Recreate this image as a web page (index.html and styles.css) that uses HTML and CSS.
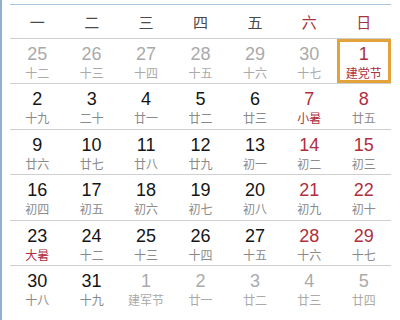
FILE: index.html
```html
<!DOCTYPE html>
<html lang="zh">
<head>
<meta charset="utf-8">
<link rel="stylesheet" href="styles.css">
</head>
<body>
<div class="frame">
  <div class="cal">
    <div class="head">
      <div>一</div><div>二</div><div>三</div><div>四</div><div>五</div><div class="we">六</div><div class="we">日</div>
    </div>
    <div class="row">
      <div class="cell other"><span class="n">25</span><span class="l">十二</span></div>
      <div class="cell other"><span class="n">26</span><span class="l">十三</span></div>
      <div class="cell other"><span class="n">27</span><span class="l">十四</span></div>
      <div class="cell other"><span class="n">28</span><span class="l">十五</span></div>
      <div class="cell other"><span class="n">29</span><span class="l">十六</span></div>
      <div class="cell other"><span class="n">30</span><span class="l">十七</span></div>
      <div class="cell we today"><span class="n">1</span><span class="l fest">建党节</span></div>
    </div>
    <div class="row">
      <div class="cell"><span class="n">2</span><span class="l">十九</span></div>
      <div class="cell"><span class="n">3</span><span class="l">二十</span></div>
      <div class="cell"><span class="n">4</span><span class="l">廿一</span></div>
      <div class="cell"><span class="n">5</span><span class="l">廿二</span></div>
      <div class="cell"><span class="n">6</span><span class="l">廿三</span></div>
      <div class="cell we"><span class="n">7</span><span class="l fest">小暑</span></div>
      <div class="cell we"><span class="n">8</span><span class="l">廿五</span></div>
    </div>
    <div class="row">
      <div class="cell"><span class="n">9</span><span class="l">廿六</span></div>
      <div class="cell"><span class="n">10</span><span class="l">廿七</span></div>
      <div class="cell"><span class="n">11</span><span class="l">廿八</span></div>
      <div class="cell"><span class="n">12</span><span class="l">廿九</span></div>
      <div class="cell"><span class="n">13</span><span class="l">初一</span></div>
      <div class="cell we"><span class="n">14</span><span class="l">初二</span></div>
      <div class="cell we"><span class="n">15</span><span class="l">初三</span></div>
    </div>
    <div class="row">
      <div class="cell"><span class="n">16</span><span class="l">初四</span></div>
      <div class="cell"><span class="n">17</span><span class="l">初五</span></div>
      <div class="cell"><span class="n">18</span><span class="l">初六</span></div>
      <div class="cell"><span class="n">19</span><span class="l">初七</span></div>
      <div class="cell"><span class="n">20</span><span class="l">初八</span></div>
      <div class="cell we"><span class="n">21</span><span class="l">初九</span></div>
      <div class="cell we"><span class="n">22</span><span class="l">初十</span></div>
    </div>
    <div class="row">
      <div class="cell"><span class="n">23</span><span class="l fest">大暑</span></div>
      <div class="cell"><span class="n">24</span><span class="l">十二</span></div>
      <div class="cell"><span class="n">25</span><span class="l">十三</span></div>
      <div class="cell"><span class="n">26</span><span class="l">十四</span></div>
      <div class="cell"><span class="n">27</span><span class="l">十五</span></div>
      <div class="cell we"><span class="n">28</span><span class="l">十六</span></div>
      <div class="cell we"><span class="n">29</span><span class="l">十七</span></div>
    </div>
    <div class="row last">
      <div class="cell"><span class="n">30</span><span class="l">十八</span></div>
      <div class="cell"><span class="n">31</span><span class="l">十九</span></div>
      <div class="cell other"><span class="n">1</span><span class="l">建军节</span></div>
      <div class="cell other"><span class="n">2</span><span class="l">廿一</span></div>
      <div class="cell other"><span class="n">3</span><span class="l">廿二</span></div>
      <div class="cell other"><span class="n">4</span><span class="l">廿三</span></div>
      <div class="cell other"><span class="n">5</span><span class="l">廿四</span></div>
    </div>
  </div>
</div>
</body>
</html>
```
FILE: styles.css
```css
html, body {
  margin: 0;
  padding: 0;
  background: #fff;
}
.frame {
  width: 398px;
  height: 320px;
  border-left: 2px solid #8fb1cf;
  padding-top: 4px;
  padding-left: 8px;
  box-sizing: border-box;
}
.cal {
  width: 381px;
  border-top: 1px solid #a9c4dc;
  font-family: "Liberation Sans", "Noto Sans CJK SC", sans-serif;
}
.head {
  display: grid;
  grid-template-columns: repeat(7, 1fr);
  height: 33px;
  border-bottom: 1px solid #cfcfcf;
  align-items: center;
  font-family: "Noto Sans CJK SC", sans-serif;
  font-size: 15px;
  color: #4a4a4a;
  text-align: center;
}
.head .we {
  color: #a8333f;
}
.row {
  display: grid;
  grid-template-columns: repeat(7, 1fr);
  border-bottom: 1px solid #cfcfcf;
}
.row.last {
  border-bottom: none;
}
.cell {
  height: 44.4px;
  box-sizing: border-box;
  display: flex;
  flex-direction: column;
  align-items: center;
  padding-top: 5px;
}
.n {
  font-size: 18px;
  line-height: 20px;
  color: #151515;
}
.l {
  font-family: "Noto Sans CJK SC", sans-serif;
  font-size: 12px;
  line-height: 15px;
  margin-top: 1px;
  color: #8a8a8a;
}
.we .n {
  color: #b02f3e;
}
.l.fest {
  color: #b02f3e;
}
.other .n,
.other .l {
  color: #aaaaaa;
}
.today {
  box-shadow: inset 0 0 0 3px #e3a33a;
}
```
